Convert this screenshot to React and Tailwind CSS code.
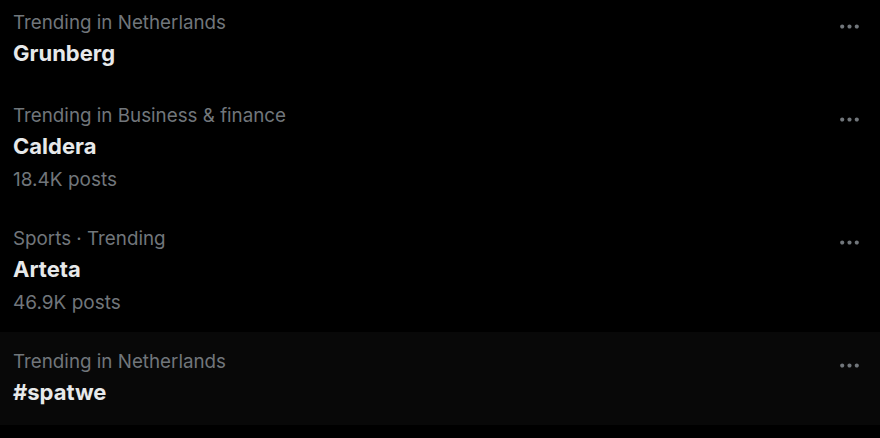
import React from "react";

const trends = [
  { category: "Trending in Netherlands", name: "Grunberg" },
  { category: "Trending in Business & finance", name: "Caldera", posts: "18.4K posts" },
  { category: "Sports · Trending", name: "Arteta", posts: "46.9K posts" },
  { category: "Trending in Netherlands", name: "#spatwe", hover: true },
];

const MoreIcon = () => (
  <svg viewBox="0 0 24 24" className="w-[25px] h-[25px] fill-[#71767b]">
    <path d="M3 12c0-1.1.9-2 2-2s2 .9 2 2-.9 2-2 2-2-.9-2-2zm9 2c1.1 0 2-.9 2-2s-.9-2-2-2-2 .9-2 2 .9 2 2 2zm7 0c1.1 0 2-.9 2-2s-.9-2-2-2-2 .9-2 2 .9 2 2 2z" />
  </svg>
);

const TrendRow = ({ category, name, posts, hover }) => (
  <div
    className={`flex justify-between pl-[13px] pr-[18px] pt-[18px] ${
      posts ? "pb-[15px]" : "pb-[16px]"
    } ${hover ? "bg-[#080808]" : ""}`}
  >
    <div className="flex flex-col">
      <span className="text-[18.8px] leading-[24px] text-[#71767b]">{category}</span>
      <span className="mt-[1px] text-[22px] leading-[34px] font-bold text-[#e7e9ea]">
        {name}
      </span>
      {posts && (
        <span className="mt-[3px] text-[19px] leading-[28px] text-[#71767b]">{posts}</span>
      )}
    </div>
    <div className="pt-[3px]">
      <MoreIcon />
    </div>
  </div>
);

export default function App() {
  return (
    <div
      className="w-[880px] h-[438px] bg-black overflow-hidden"
      style={{ fontFamily: "Inter, 'Noto Sans', sans-serif" }}
    >
      <div className="-mt-[7px]">
        {trends.map((t, i) => (
          <TrendRow key={i} {...t} />
        ))}
      </div>
    </div>
  );
}
